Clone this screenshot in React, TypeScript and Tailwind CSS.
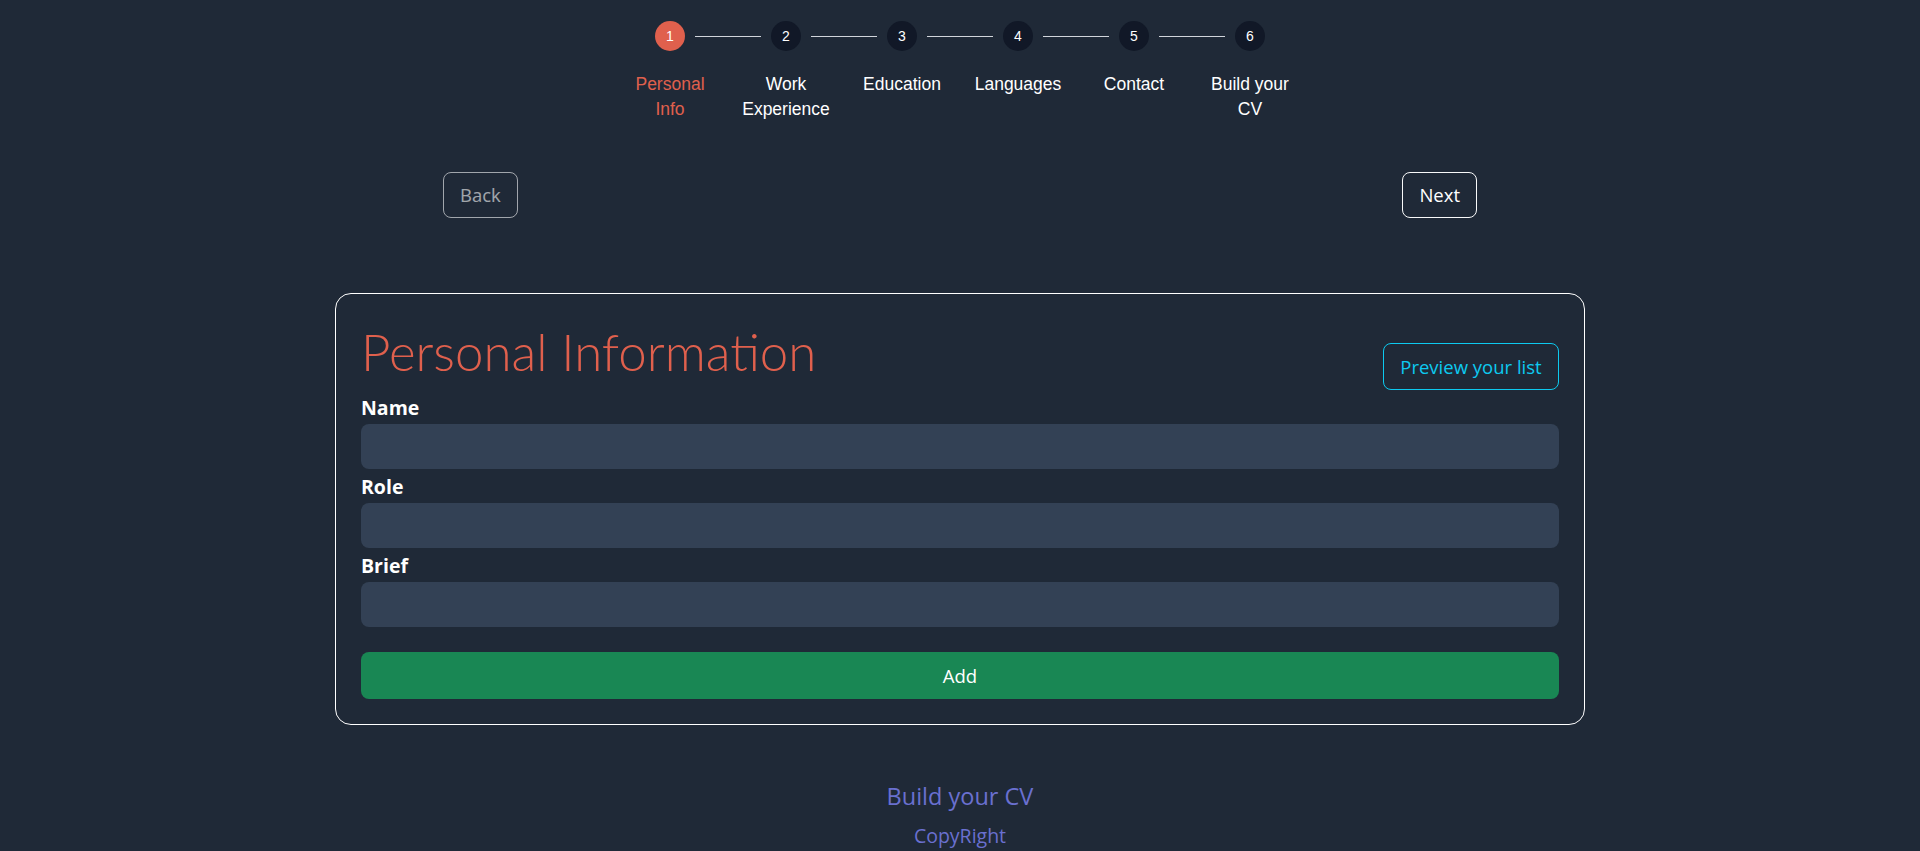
import type { ReactNode } from 'react'

const steps = ['Personal Info', 'Work Experience', 'Education', 'Languages', 'Contact', 'Build your CV']

function Stepper({ active }: { active: number }) {
  return (
    <nav className="pt-[21px] font-['Liberation_Sans',Arial,sans-serif]">
      <div className="mx-auto flex w-[610px] items-center">
        {steps.map((step, i) => (
          <div key={step} className="flex items-center">
            {i > 0 && <span className="mx-[10px] h-px w-[66px] bg-[#d1d5db]" />}
            <span
              className={
                i === active
                  ? 'flex h-[30px] w-[30px] items-center justify-center rounded-full bg-[#e0604d] text-[14px] text-white'
                  : 'flex h-[30px] w-[30px] items-center justify-center rounded-full bg-[#111827] text-[14px] text-white'
              }
            >
              {i + 1}
            </span>
          </div>
        ))}
      </div>
      <div className="mx-auto mt-[21px] grid w-[696px] grid-cols-6">
        {steps.map((step, i) => (
          <span
            key={step}
            className={
              i === active
                ? 'px-[10px] text-center text-[17.5px] leading-[25px] text-[#e0604d]'
                : 'px-[10px] text-center text-[17.5px] leading-[25px] text-white'
            }
          >
            {step}
          </span>
        ))}
      </div>
    </nav>
  )
}

function Field({ label }: { label: string }) {
  return (
    <div>
      <label className="block pb-[4px] pt-[6px] text-[19.5px] font-bold leading-[24px] text-white">{label}</label>
      <input className="block h-[45px] w-full rounded-lg bg-[#334155] px-4 text-[19px] text-white outline-none" />
    </div>
  )
}

function OutlineButton({ children, className }: { children: ReactNode; className: string }) {
  return (
    <button className={`flex h-[46px] items-center justify-center rounded-lg border px-4 text-[18.5px] ${className}`}>
      {children}
    </button>
  )
}

export default function App() {
  return (
    <div className="min-h-screen bg-[#1f2937] pb-[40px] font-['Open_Sans','Noto_Sans',sans-serif]">
      <Stepper active={0} />

      <div className="mx-auto mt-[50px] flex w-[1034px] justify-between">
        <OutlineButton className="border-[#f8f9fa] text-[#f8f9fa] opacity-60">Back</OutlineButton>
        <OutlineButton className="border-[#f8f9fa] text-white">Next</OutlineButton>
      </div>

      <section className="mx-auto mt-[75px] w-[1250px] rounded-2xl border border-white p-[25px]">
        <div className="flex h-[71px] items-end justify-between">
          <h1 className="self-start pt-[2px] font-['Lato','Open_Sans',sans-serif] text-[51px] font-light leading-[1.2] text-[#e0604d]">
            Personal Information
          </h1>
          <button className="flex h-[47px] w-[176px] items-center justify-center rounded-lg border border-[#0dcaf0] text-[18.5px] text-[#0dcaf0]">
            Preview your list
          </button>
        </div>
        <Field label="Name" />
        <Field label="Role" />
        <Field label="Brief" />
        <button className="mt-[25px] flex h-[47px] w-full items-center justify-center rounded-lg bg-[#198754] text-[18.5px] text-white">
          Add
        </button>
      </section>

      <footer className="mt-[57px] text-center">
        <h4 className="text-[23.5px] leading-[1.2] text-[#6a70d0]">Build your CV</h4>
        <p className="mt-[11px] text-[19.5px] leading-[1.5] text-[#6a70d0]">CopyRight</p>
      </footer>
    </div>
  )
}
